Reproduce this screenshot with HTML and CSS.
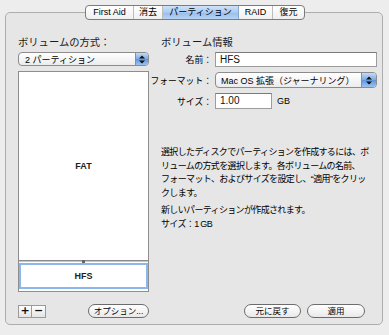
FILE: index.html
```html
<!DOCTYPE html>
<html lang="ja">
<head>
  <meta charset="UTF-8">
  <meta name="viewport" content="width=device-width, initial-scale=1.0">
  <title>ディスクユーティリティ - パーティション</title>
  <link rel="stylesheet" href="styles.css">
</head>
<body>
  <div class="window">
    <nav class="tabs">
      <span class="tab t-aid">First Aid</span>
      <span class="tab t-erase">消去</span>
      <span class="tab t-part active">パーティション</span>
      <span class="tab t-raid">RAID</span>
      <span class="tab t-restore">復元</span>
    </nav>
    <section class="panel">
      <div class="col-left">
        <h3 class="heading">ボリュームの方式：</h3>
        <div class="popup">
          <span class="popup-text">2 パーティション</span>
          <span class="arrows">
            <svg width="8" height="9" viewBox="0 0 8 9"><path d="M4 0.5 L7 3.5 L1 3.5 Z M4 8.5 L7 5.5 L1 5.5 Z" fill="#111"/></svg>
          </span>
        </div>
        <div class="partitions">
          <div class="part fat">FAT</div>
          <div class="splitter"><i></i></div>
          <div class="part hfs">HFS</div>
        </div>
        <div class="left-foot">
          <div class="pm">
            <button class="sq">+</button>
            <button class="sq">−</button>
          </div>
          <button class="pill options">オプション...</button>
        </div>
      </div>
      <div class="col-right">
        <h3 class="heading info">ボリューム情報</h3>
        <div class="form">
          <label class="lbl">名前：</label>
          <div class="field name">HFS</div>
          <label class="lbl">フォーマット：</label>
          <div class="popup format">
            <span class="popup-text">Mac OS 拡張（ジャーナリング）</span>
            <span class="arrows">
              <svg width="8" height="9" viewBox="0 0 8 9"><path d="M4 0.5 L7 3.5 L1 3.5 Z M4 8.5 L7 5.5 L1 5.5 Z" fill="#111"/></svg>
            </span>
          </div>
          <label class="lbl">サイズ：</label>
          <div class="size-row">
            <div class="field size">1.00</div>
            <span class="unit">GB</span>
          </div>
        </div>
        <p class="desc first">選択したディスクでパーティションを作成するには、ボ<br>リュームの方式を選択します。各ボリュームの名前、<br>フォーマット、およびサイズを設定し、“適用”をクリッ<br>クします。</p>
        <p class="desc">新しいパーティションが作成されます。<br>サイズ：1 GB</p>
        <div class="right-foot">
          <button class="pill revert">元に戻す</button>
          <button class="pill apply">適用</button>
        </div>
      </div>
    </section>
  </div>
</body>
</html>
```

FILE: styles.css
```css
body {
  margin: 0;
  background-color: #ededed;
  font-family: "Liberation Sans", "Noto Sans CJK JP", sans-serif;
  color: #111;
}
.window {
  width: 389px;
  height: 335px;
  padding-top: 5px;
  box-sizing: border-box;
}
.tabs {
  position: relative;
  z-index: 1;
  display: flex;
  width: 220px;
  height: 15px;
  margin: 0 0 -8px 85px;
  border: 1px solid #7c7c7c;
  border-radius: 4px;
  box-sizing: border-box;
  background: linear-gradient(#ffffff, #f0f0f0);
  overflow: hidden;
}
.tab {
  display: flex;
  align-items: center;
  justify-content: center;
  font-size: 9px;
  line-height: 13px;
  border-right: 1px solid #bdbdbd;
  box-sizing: border-box;
  color: #000;
}
.tab:last-child {
  border-right: none;
}
.t-aid { width: 48px; }
.t-erase { width: 29px; }
.t-part { width: 76px; }
.t-raid { width: 34px; }
.t-restore { flex: 1; }
.tab.active {
  background: linear-gradient(#cfe2f8, #a9cbf1 50%, #95bdec 51%, #b6d4f5);
  border-right-color: #8aa6c8;
}
.panel {
  display: flex;
  gap: 1px;
  height: 313px;
  margin: 0 6px 0 5px;
  padding: 23px 5px 6px 12px;
  border: 1px solid #adadad;
  border-radius: 5px;
  box-sizing: border-box;
  background-color: #e6e6e6;
}
.heading {
  margin: 0;
  height: 14px;
  font-size: 10.3px;
  line-height: 14px;
  font-weight: normal;
  color: #1a1a1a;
}
.col-left {
  display: flex;
  flex-direction: column;
  width: 131px;
}
.col-left .heading {
  margin-bottom: 2px;
}
.popup {
  display: flex;
  align-items: center;
  height: 14px;
  border: 1px solid #8c8c8c;
  border-radius: 4px;
  box-sizing: border-box;
  background: linear-gradient(#ffffff, #ececec);
  overflow: hidden;
}
.popup-text {
  flex: 1;
  padding-left: 6px;
  font-size: 9px;
  white-space: nowrap;
  color: #000;
}
.arrows {
  display: flex;
  align-items: center;
  justify-content: center;
  width: 12px;
  height: 100%;
  border-left: 1px solid #6d93c4;
  background: linear-gradient(#c3dbf6, #79a9e6 50%, #5f95de 51%, #9cc3f0);
}
.partitions {
  flex: 1;
  display: flex;
  flex-direction: column;
  margin-top: 5px;
  border: 1px solid #8e8e8e;
  background-color: #fff;
}
.part {
  display: flex;
  align-items: center;
  justify-content: center;
  font-size: 9px;
  font-weight: bold;
  color: #222;
}
.fat {
  flex: 1;
}
.splitter {
  display: flex;
  justify-content: center;
  height: 1px;
  border-bottom: 1px solid #c8c8c8;
  background-color: #8a8a8a;
}
.splitter i {
  width: 3px;
  height: 3px;
  background-color: #666;
}
.hfs {
  height: 26px;
  margin: 1px 0 2px;
  border: 2px solid #8cb7ec;
  box-sizing: border-box;
}
.left-foot {
  display: flex;
  align-items: center;
  height: 14px;
  margin-top: 12px;
}
.pm {
  display: flex;
}
.sq {
  width: 14px;
  height: 13px;
  padding: 0;
  margin: 0;
  border: 1px solid #9a9a9a;
  background: linear-gradient(#ffffff, #e4e4e4);
  font-family: "DejaVu Sans", sans-serif;
  font-size: 11px;
  font-weight: bold;
  line-height: 10px;
  color: #111;
}
.sq + .sq {
  border-left: none;
}
button.pill {
  height: 14px;
  padding: 0;
  border: 1px solid #6c6c6c;
  border-radius: 7px;
  background: linear-gradient(#ffffff, #e9e9e9);
  font-family: "Liberation Sans", "Noto Sans CJK JP", sans-serif;
  font-size: 8.5px;
  line-height: 12px;
  color: #000;
}
.options {
  width: 64px;
  margin-left: 42px;
}
.col-right {
  display: flex;
  flex-direction: column;
  flex: 1;
}
.info {
  padding-left: 11px;
  margin-bottom: 2px;
}
.form {
  display: grid;
  grid-template-columns: 62px 1fr;
  column-gap: 3px;
  row-gap: 5px;
  align-items: center;
}
.lbl {
  text-align: right;
  font-size: 8.8px;
  white-space: nowrap;
  color: #000;
}
.field {
  height: 15px;
  padding-left: 4px;
  border: 1px solid #9c9c9c;
  border-top-color: #7a7a7a;
  box-sizing: border-box;
  background-color: #fff;
  font-size: 10px;
  line-height: 13px;
}
.format {
  height: 16px;
}
.format .popup-text {
  font-size: 9px;
  padding-left: 5px;
}
.format .arrows {
  width: 14px;
}
.size-row {
  display: flex;
  align-items: center;
}
.size {
  width: 57px;
  height: 16px;
  line-height: 14px;
}
.unit {
  margin-left: 5px;
  font-size: 9px;
  color: #000;
}
.desc {
  margin: 4px 0 0;
  padding: 0 0 0 11px;
  font-size: 9px;
  line-height: 13.5px;
  letter-spacing: -0.65px;
  white-space: nowrap;
  color: #000;
}
.desc.first {
  margin-top: 37px;
}
.right-foot {
  display: flex;
  justify-content: flex-end;
  gap: 6px;
  margin-top: auto;
  padding-right: 12px;
}
.revert {
  width: 57px;
}
.apply {
  width: 58px;
}
```
